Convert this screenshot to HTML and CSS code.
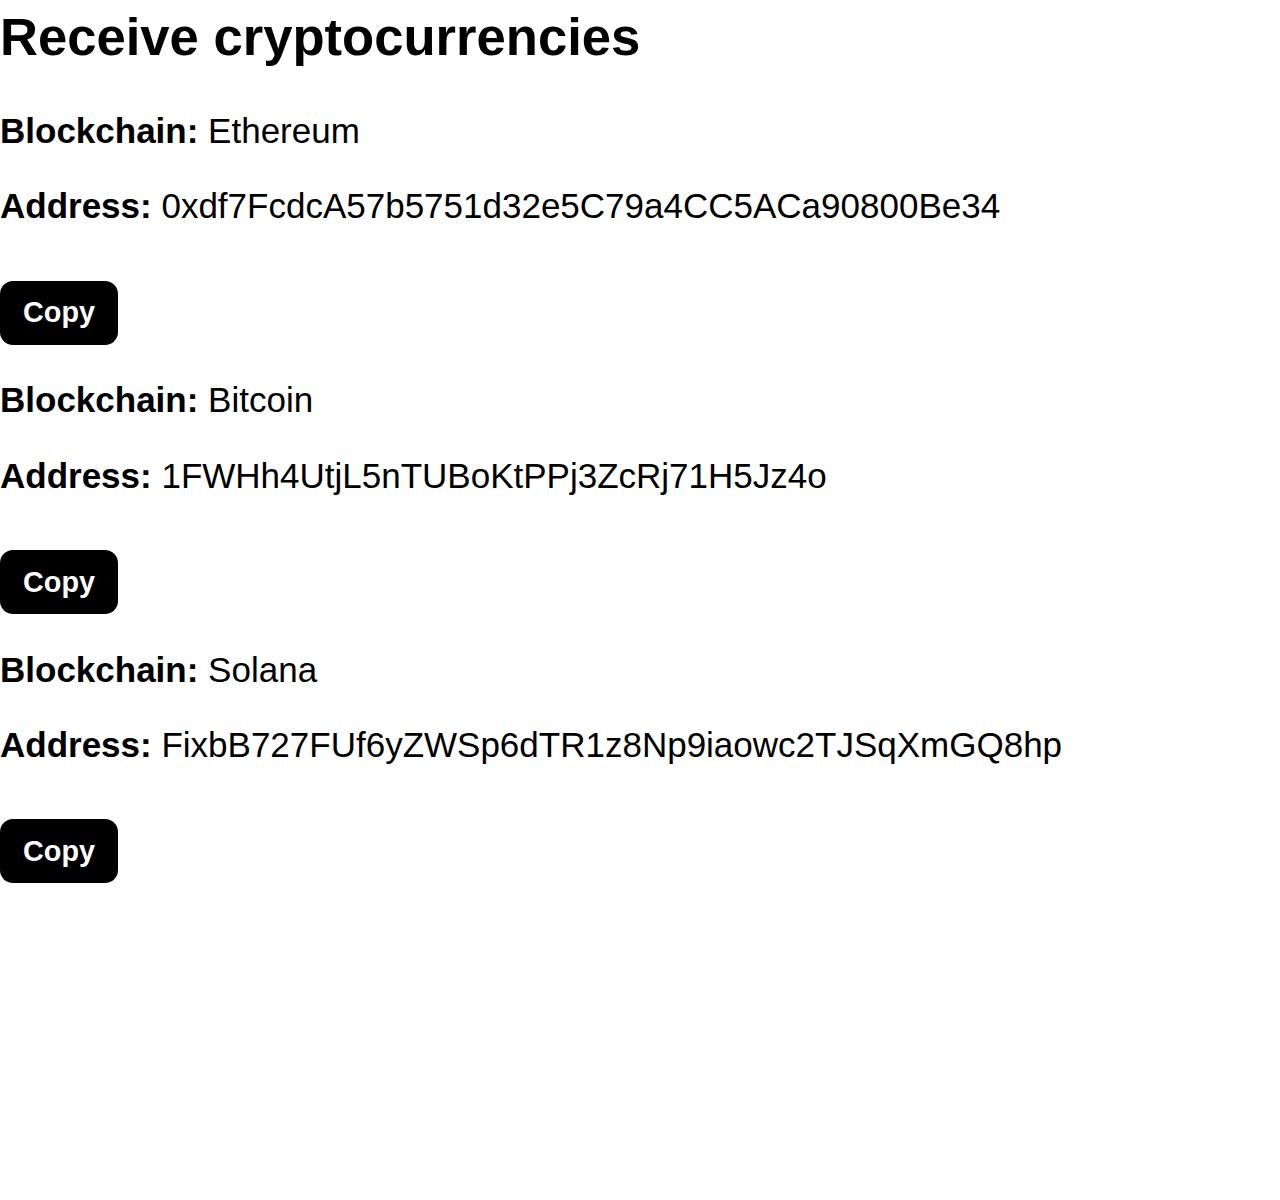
FILE: index.html
```html
<!DOCTYPE html>
<html lang="en">
<head>
    <meta charset="UTF-8">
    <title>Receive cryptocurrencies</title>
    <link rel="stylesheet" href="styles.css">
</head>
<body>
    <h1>Receive cryptocurrencies</h1>

    <div class="wallet">
        <p><b>Blockchain:</b> Ethereum</p>
        <p><b>Address:</b> 0xdf7FcdcA57b5751d32e5C79a4CC5ACa90800Be34</p>
        <button class="btn">Copy</button>
    </div>

    <div class="wallet">
        <p><b>Blockchain:</b> Bitcoin</p>
        <p><b>Address:</b> 1FWHh4UtjL5nTUBoKtPPj3ZcRj71H5Jz4o</p>
        <button class="btn">Copy</button>
    </div>

    <div class="wallet">
        <p><b>Blockchain:</b> Solana</p>
        <p><b>Address:</b> FixbB727FUf6yZWSp6dTR1z8Np9iaowc2TJSqXmGQ8hp</p>
        <button class="btn">Copy</button>
    </div>
</body>
</html>
```

FILE: styles.css
```css
body {
    font-family: 'Liberation Sans', Arial, sans-serif;
    margin: 0;
    padding: 0;
    background: #fff;
    color: #000;
}

h1 {
    font-size: 52.6px;
    margin: 6px 0 44px 0;
}

.wallet p {
    font-size: 35px;
    margin: 35.4px 0;
}

.btn {
    display: block;
    margin: 54.5px 0 35.4px 0;
    padding: 0 23px;
    height: 64px;
    background: #000;
    color: #fff;
    border: none;
    border-radius: 13px;
    font-family: 'Liberation Sans', Arial, sans-serif;
    font-size: 28.8px;
    font-weight: bold;
    cursor: pointer;
}
```
